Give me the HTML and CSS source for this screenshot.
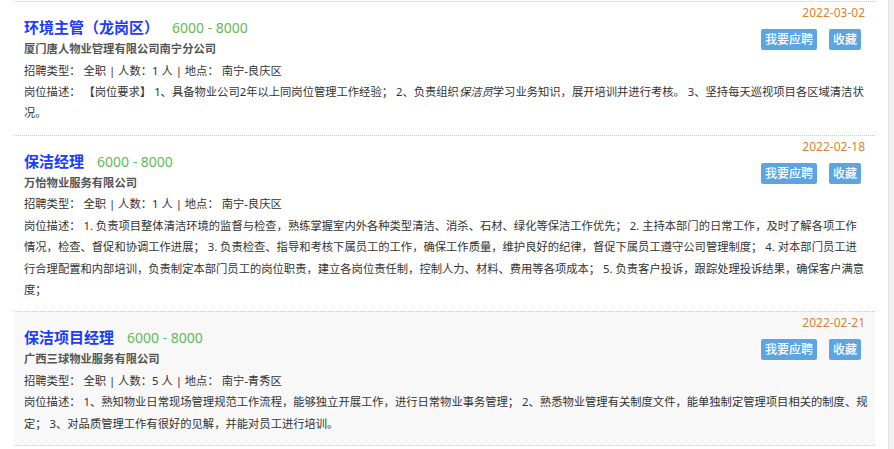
FILE: index.html
```html
<!DOCTYPE html>
<html>
<head>
    <title>招聘列表</title>
    <link rel="stylesheet" href="styles.css">
</head>
<body>
    <div class="page">
        <div class="job-list">
            <div class="job">
                <div class="job-side">
                    <div class="job-date">2022-03-02</div>
                    <div class="job-actions">
                        <a class="btn" href="#">我要应聘</a>
                        <a class="btn" href="#">收藏</a>
                    </div>
                </div>
                <div class="job-title">环境主管（龙岗区）<span class="salary">6000 - 8000</span></div>
                <div class="company">厦门唐人物业管理有限公司南宁分公司</div>
                <div class="job-info">招聘类型： 全职 | 人数：1 人 | 地点： 南宁-良庆区</div>
                <div class="job-desc">岗位描述： 【岗位要求】 1、具备物业公司2年以上同岗位管理工作经验； 2、负责组织<em>保洁员</em>学习业务知识，展开培训并进行考核。 3、坚持每天巡视项目各区域清洁状<br>况。</div>
            </div>
            <div class="job">
                <div class="job-side">
                    <div class="job-date">2022-02-18</div>
                    <div class="job-actions">
                        <a class="btn" href="#">我要应聘</a>
                        <a class="btn" href="#">收藏</a>
                    </div>
                </div>
                <div class="job-title">保洁经理<span class="salary">6000 - 8000</span></div>
                <div class="company">万怡物业服务有限公司</div>
                <div class="job-info">招聘类型： 全职 | 人数：1 人 | 地点： 南宁-良庆区</div>
                <div class="job-desc">岗位描述： 1. 负责项目整体清洁环境的监督与检查，熟练掌握室内外各种类型清洁、消杀、石材、绿化等保洁工作优先； 2. 主持本部门的日常工作，及时了解各项工作<br>情况，检查、督促和协调工作进展； 3. 负责检查、指导和考核下属员工的工作，确保工作质量，维护良好的纪律，督促下属员工遵守公司管理制度； 4. 对本部门员工进<br>行合理配置和内部培训，负责制定本部门员工的岗位职责，建立各岗位责任制，控制人力、材料、费用等各项成本； 5. 负责客户投诉，跟踪处理投诉结果，确保客户满意<br>度；</div>
            </div>
            <div class="job active">
                <div class="job-side">
                    <div class="job-date">2022-02-21</div>
                    <div class="job-actions">
                        <a class="btn" href="#">我要应聘</a>
                        <a class="btn" href="#">收藏</a>
                    </div>
                </div>
                <div class="job-title">保洁项目经理<span class="salary">6000 - 8000</span></div>
                <div class="company">广西三球物业服务有限公司</div>
                <div class="job-info">招聘类型： 全职 | 人数：5 人 | 地点： 南宁-青秀区</div>
                <div class="job-desc">岗位描述： 1、熟知物业日常现场管理规范工作流程，能够独立开展工作，进行日常物业事务管理； 2、熟悉物业管理有关制度文件，能单独制定管理项目相关的制度、规<br>定； 3、对品质管理工作有很好的见解，并能对员工进行培训。</div>
            </div>
        </div>
        <div class="scroll-track"></div>
    </div>
</body>
</html>
```

FILE: styles.css
```css
body {
    margin: 0;
    font-family: "Noto Sans", "Noto Sans CJK SC", sans-serif;
    font-size: 11.3px;
    color: #333;
    background: #fff;
}
.page {
    display: flex;
    min-height: 449px;
    padding-left: 14px;
}
.job-list {
    flex: 1;
    margin-top: 1px;
    margin-right: 13px;
    align-self: flex-start;
    border-bottom: 1px dotted #ccc;
}
.scroll-track {
    width: 5px;
    background: #f1f1f1;
    border-left: 1px solid #e4e4e4;
}
.job {
    border-top: 1px dotted #ccc;
    padding: 3px 10px 11px 10px;
}
.job.active {
    background-color: #f8f8f8;
}
.job::after {
    content: "";
    display: block;
    clear: both;
}
.job-side {
    float: right;
    text-align: right;
}
.job-date {
    font-size: 12px;
    line-height: 16px;
    color: #e0822e;
}
.job-actions {
    display: flex;
    gap: 12px;
    margin-top: 8px;
    margin-right: 4px;
}
.btn {
    display: block;
    padding: 0 4px;
    height: 21px;
    line-height: 21px;
    font-size: 12px;
    font-weight: 500;
    color: #fff;
    background-color: #5ba5e3;
    border-radius: 2px;
    text-decoration: none;
}
.job-title {
    margin-top: 12px;
    font-size: 15px;
    line-height: 21px;
    font-weight: bold;
    color: #1b3cff;
}
.salary {
    margin-left: 13px;
    font-size: 14px;
    font-weight: normal;
    color: #62bb55;
}
.company {
    font-weight: bold;
    color: #555;
    line-height: 21.5px;
}
.job-info {
    line-height: 21.5px;
}
.job-desc {
    margin-right: -8px;
    line-height: 21.4px;
}
.job-desc em {
    font-style: italic;
}
```
